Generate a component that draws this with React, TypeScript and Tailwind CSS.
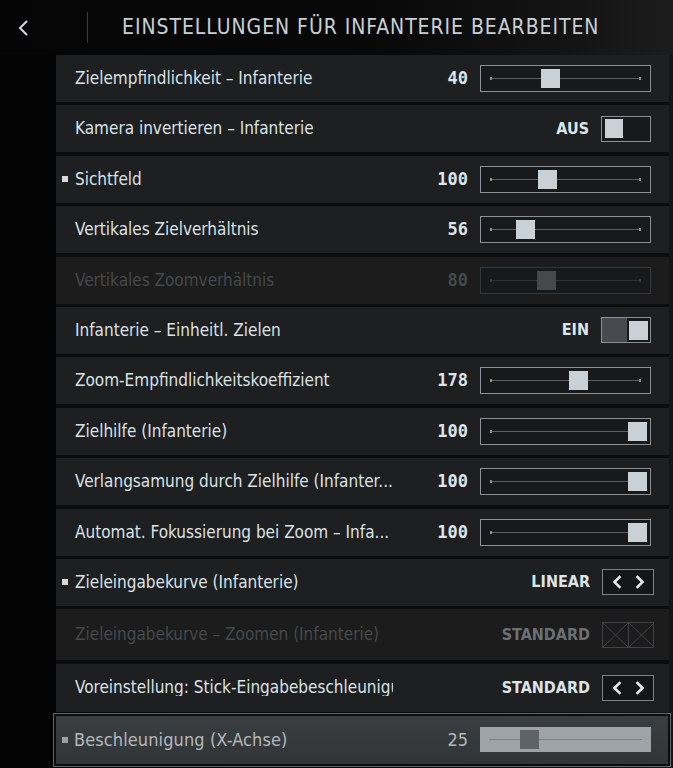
import React from "react";

const LBL = "font-['DejaVu_Sans_Condensed','DejaVu_Sans',sans-serif]";
const NUM = "font-['DejaVu_Sans_Mono',monospace]";

function Slider({ thumb, disabled }: { thumb: string; disabled?: boolean }) {
  return (
    <div
      className={`relative w-[171px] h-[27px] border ${
        disabled ? "border-[#33373a]" : "border-[#8b9196]"
      } bg-[#17191b]`}
    >
      <div
        className={`absolute left-[9px] right-[9px] top-[12px] h-px ${
          disabled ? "bg-[#2e3235]" : "bg-[#5b6065]"
        }`}
      />
      <div className={`absolute left-[9px] top-[11px] w-[2px] h-[3px] ${disabled ? "bg-[#3a3e41]" : "bg-[#8a9095]"}`} />
      <div className={`absolute right-[9px] top-[11px] w-[2px] h-[3px] ${disabled ? "bg-[#3a3e41]" : "bg-[#8a9095]"}`} />
      <div
        className={`absolute top-[3px] w-[19px] h-[19px] ${
          disabled ? "bg-[#45494c]" : "bg-[#c9d1d7]"
        } ${thumb}`}
      />
    </div>
  );
}

function Toggle({ on }: { on: boolean }) {
  return (
    <div className="relative w-[50px] h-[26px] border border-[#8b9196] bg-[#17191b] flex items-center">
      {on ? (
        <div className="flex items-center w-full h-full">
          <div className="flex-1 h-full bg-[#474b4f]" />
          <div className="w-[19px] h-[19px] bg-[#c9d1d7] mx-[2px]" />
        </div>
      ) : (
        <div className="w-[18px] h-[19px] bg-[#c9d1d7] ml-[3px]" />
      )}
    </div>
  );
}

function Chev({ dir }: { dir: "l" | "r" }) {
  return (
    <svg width="10" height="14" viewBox="0 0 10 14">
      <polyline
        points={dir === "l" ? "7.5,2 2.5,7 7.5,12" : "2.5,2 7.5,7 2.5,12"}
        fill="none"
        stroke="#e3e8ec"
        strokeWidth="2.6"
        strokeLinecap="square"
      />
    </svg>
  );
}

function Selector() {
  return (
    <div className="w-[52px] h-[26px] border border-[#7d8388] bg-[#141618] flex items-center justify-center gap-[13px]">
      <Chev dir="l" />
      <Chev dir="r" />
    </div>
  );
}

function XBox() {
  const cell = (
    <svg width="25" height="24" viewBox="0 0 25 24" className="block">
      <line x1="0" y1="0" x2="25" y2="24" stroke="#3f4346" strokeWidth="1" />
      <line x1="25" y1="0" x2="0" y2="24" stroke="#3f4346" strokeWidth="1" />
    </svg>
  );
  return (
    <div className="w-[52px] h-[26px] border border-[#3f4346] flex">
      <div className="border-r border-[#3f4346]">{cell}</div>
      <div>{cell}</div>
    </div>
  );
}

function Row({
  label,
  bullet,
  disabled,
  h = "h-[47px]",
  value,
  valueClass,
  control,
  clip,
}: {
  label: string;
  bullet?: boolean;
  disabled?: boolean;
  h?: string;
  value: string;
  valueClass: string;
  control: React.ReactNode;
  clip?: boolean;
}) {
  return (
    <div
      className={`relative ${h} shrink-0 flex items-center pl-[19px] pr-[18px] ${
        disabled ? "bg-[#1c1c1c]" : "bg-[#1d1f21]"
      }`}
    >
      {bullet && (
        <div className="absolute left-[6px] top-1/2 -translate-y-1/2 w-[6px] h-[6px] bg-[#d4dade]" />
      )}
      <div
        className={`${LBL} text-[17px] leading-none whitespace-nowrap shrink-0 ${
          clip ? "overflow-hidden w-[318px]" : ""
        } ${disabled ? "text-[#45494c]" : "text-[#dce2e6]"}`}
      >
        {label}
      </div>
      <div className="flex-1" />
      <div className={`mr-[12px] leading-none ${valueClass}`}>{value}</div>
      {control}
    </div>
  );
}

const numCls = `${NUM} font-bold text-[17px] text-[#dfe4e8]`;
const capCls = `${LBL} font-bold text-[16px] text-[#dfe4e8]`;

export default function App() {
  return (
    <div className="w-[673px] h-[768px] overflow-hidden relative bg-[linear-gradient(90deg,#030303_0%,#070707_50%,#0e0e0e_80%,#161616_100%)]">
      {/* Header */}
      <div className="h-[55px] flex items-center bg-[linear-gradient(90deg,#050505_0%,#080808_55%,#141414_85%,#1c1c1c_100%)]">
        <div className="w-[87px] flex items-center pl-[17px]">
          <svg width="12" height="18" viewBox="0 0 12 18">
            <polyline points="10,2 3,9 10,16" fill="none" stroke="#d5dbe0" strokeWidth="2" />
          </svg>
        </div>
        <div className="w-px h-[31px] bg-[#3a3b3c]" />
        <div
          className={`ml-[34px] ${LBL} text-[21px] tracking-[0.95px] text-[#c9d0d6] leading-none`}
        >
          EINSTELLUNGEN FÜR INFANTERIE BEARBEITEN
        </div>
      </div>

      {/* Rows */}
      <div className="ml-[56px] mr-[4px] bg-[#0b0c0d] flex flex-col gap-[3.4px]">
        <Row label="Zielempfindlichkeit – Infanterie" value="40" valueClass={numCls} control={<Slider thumb="left-[60px]" />} />
        <Row label="Kamera invertieren – Infanterie" value="AUS" valueClass={capCls} control={<Toggle on={false} />} />
        <Row label="Sichtfeld" bullet value="100" valueClass={numCls} control={<Slider thumb="left-[57px]" />} />
        <Row label="Vertikales Zielverhältnis" value="56" valueClass={numCls} control={<Slider thumb="left-[35px]" />} />
        <Row
          label="Vertikales Zoomverhältnis"
          disabled
          value="80"
          valueClass={`${NUM} font-bold text-[17px] text-[#45494c]`}
          control={<Slider thumb="left-[56px]" disabled />}
        />
        <Row label="Infanterie – Einheitl. Zielen" value="EIN" valueClass={capCls} control={<Toggle on />} />
        <Row label="Zoom-Empfindlichkeitskoeffizient" value="178" valueClass={numCls} control={<Slider thumb="left-[88px]" />} />
        <Row label="Zielhilfe (Infanterie)" value="100" valueClass={numCls} control={<Slider thumb="left-[147px]" />} />
        <Row label="Verlangsamung durch Zielhilfe (Infanter..." value="100" valueClass={numCls} control={<Slider thumb="left-[147px]" />} />
        <Row label="Automat. Fokussierung bei Zoom – Infa..." value="100" valueClass={numCls} control={<Slider thumb="left-[147px]" />} />
        <Row
          label="Zieleingabekurve (Infanterie)"
          bullet
          value="LINEAR"
          valueClass={capCls}
          control={<div className="mr-[-3px]"><Selector /></div>}
        />
        <Row
          label="Zieleingabekurve – Zoomen (Infanterie)"
          disabled
          h="h-[51px]"
          value="STANDARD"
          valueClass={`${LBL} font-bold text-[16px] text-[#6c7074]`}
          control={<div className="mr-[-3px]"><XBox /></div>}
        />
        <Row
          label="Voreinstellung: Stick-Eingabebeschleunigung"
          clip
          h="h-[48px]"
          value="STANDARD"
          valueClass={capCls}
          control={<div className="mr-[-3px]"><Selector /></div>}
        />
      </div>

      {/* Focused row */}
      <div className="ml-[53px] mr-[2px] mt-[1px] border border-[#62666a] p-[2px] bg-[#0c0d0e]">
        <div className="relative h-[48px] flex items-center pl-[18px] pr-[17px] bg-[linear-gradient(180deg,#3b3e41,#323538)]">
          <div className="absolute left-[6px] top-1/2 -translate-y-1/2 w-[6px] h-[6px] bg-[#9ba0a4]" />
          <div className={`${LBL} text-[18px] tracking-[0.1px] leading-none text-[#b3b8bc]`}>Beschleunigung (X-Achse)</div>
          <div className="flex-1" />
          <div className={`mr-[12px] leading-none ${LBL} text-[18px] text-[#b3b8bc]`}>25</div>
          <div className="relative w-[171px] h-[25px] bg-[#9ea3a7]">
            <div className="absolute left-[9px] right-[9px] top-[12px] h-px bg-[#7c8185]" />
            <div className="absolute left-[40px] top-[3px] w-[19px] h-[19px] bg-[#5f6367]" />
          </div>
        </div>
      </div>
    </div>
  );
}
